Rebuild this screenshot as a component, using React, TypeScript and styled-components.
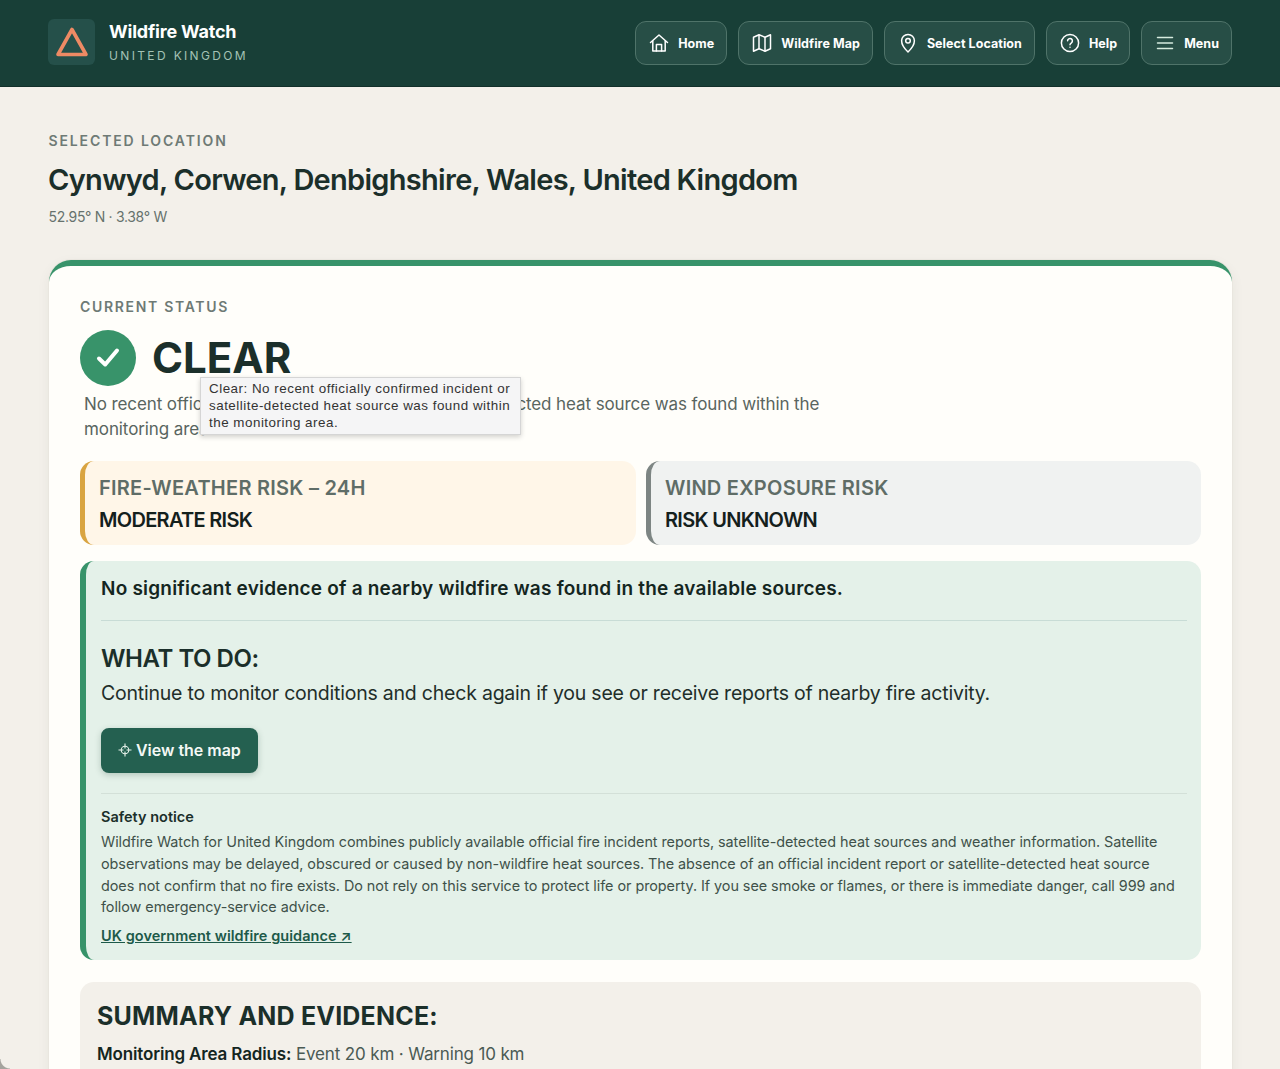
import React from 'react';
import styled, {createGlobalStyle} from 'styled-components';

const FONT = '"Inter", "Noto Sans", "Liberation Sans", sans-serif';

const GlobalStyle = createGlobalStyle`
    html, body {
        margin: 0;
        padding: 0;
        height: 1069px;
        overflow: hidden;
        background: #f3f0ea;
        font-family: ${FONT};
        color: #1b2f2a;
    }
    * {
        box-sizing: border-box;
    }
`;

const NAV_ITEMS = [
    {label: 'Home', icon: <HomeIcon/>},
    {label: 'Wildfire Map', icon: <MapIcon/>},
    {label: 'Select Location', icon: <PinIcon/>},
    {label: 'Help', icon: <HelpIcon/>},
    {label: 'Menu', icon: <MenuIcon/>},
];

function HomeIcon() {
    return (
        <svg width='20' height='20' viewBox='0 0 20 20' fill='none' stroke='#fff' strokeWidth='1.5' strokeLinejoin='round' strokeLinecap='round'>
            <path d='M1.5 9.5 10 2l8.5 7.5'/>
            <path d='M3.8 8v10h12.4V8'/>
            <path d='M7.4 18v-6.6h5.2V18'/>
        </svg>
    );
}

function MapIcon() {
    return (
        <svg width='20' height='20' viewBox='0 0 20 20' fill='none' stroke='#fff' strokeWidth='1.5' strokeLinejoin='round'>
            <path d='M1.5 4.2 7 1.8l6 2.4 5.5-2.4v14L13 18.2l-6-2.4-5.5 2.4z'/>
            <path d='M7 1.8v14M13 4.2v14'/>
        </svg>
    );
}

function PinIcon() {
    return (
        <svg width='20' height='20' viewBox='0 0 20 20' fill='none' stroke='#fff' strokeWidth='1.5'>
            <path d='M10 19s-6.4-6-6.4-11.2a6.4 6.4 0 0 1 12.8 0C16.4 13 10 19 10 19z' strokeLinejoin='round'/>
            <circle cx='10' cy='7.8' r='2.3'/>
        </svg>
    );
}

function HelpIcon() {
    return (
        <svg width='20' height='20' viewBox='0 0 20 20' fill='none' stroke='#fff' strokeWidth='1.5' strokeLinecap='round'>
            <circle cx='10' cy='10' r='8.6'/>
            <path d='M7.6 7.8a2.4 2.4 0 1 1 3.8 2c-.9.6-1.4 1-1.4 2'/>
            <path d='M10 14.2v.1'/>
        </svg>
    );
}

function MenuIcon() {
    return (
        <svg width='20' height='20' viewBox='0 0 20 20' fill='none' stroke='#d6ecdf' strokeWidth='1.5' strokeLinecap='round'>
            <path d='M2.5 4.5h15M2.5 10h15M2.5 15.5h15'/>
        </svg>
    );
}

const App = () => {
    return (
        <>
            <GlobalStyle/>
            <Header>
                <Brand>
                    <LogoTile>
                        <svg width='34' height='32' viewBox='0 0 34 32' fill='none'>
                            <path d='M17 3.5 31 28.5H3z' stroke='#ee8a64' strokeWidth='3.6' strokeLinejoin='round'/>
                        </svg>
                    </LogoTile>
                    <BrandText>
                        <BrandName>{'Wildfire Watch'}</BrandName>
                        <BrandCountry>{'UNITED KINGDOM'}</BrandCountry>
                    </BrandText>
                </Brand>
                <Nav>
                    {NAV_ITEMS.map((item) => (
                        <NavButton key={item.label}>
                            {item.icon}
                            <span>{item.label}</span>
                        </NavButton>
                    ))}
                </Nav>
            </Header>
            <Main>
                <Eyebrow>{'SELECTED LOCATION'}</Eyebrow>
                <LocationTitle>{'Cynwyd, Corwen, Denbighshire, Wales, United Kingdom'}</LocationTitle>
                <Coords>{'52.95° N · 3.38° W'}</Coords>
                <StatusCard>
                    <CardEyebrow>{'CURRENT STATUS'}</CardEyebrow>
                    <StatusRow>
                        <CheckBadge>
                            <svg width='28' height='28' viewBox='0 0 28 28' fill='none' stroke='#fff' strokeWidth='4' strokeLinecap='round' strokeLinejoin='round'>
                                <path d='M5 14.5 11.2 20.5 23 6.5'/>
                            </svg>
                        </CheckBadge>
                        <StatusWord>{'CLEAR'}</StatusWord>
                    </StatusRow>
                    <StatusText>
                        {'No recent officially confirmed incident or satellite-detected heat source was found within the monitoring area.'}
                        <Tooltip>{'Clear: No recent officially confirmed incident or satellite-detected heat source was found within the monitoring area.'}</Tooltip>
                    </StatusText>
                    <RiskGrid>
                        <RiskCard $bg='#fff6e8' $edge='#d9a441'>
                            <RiskLabel>{'FIRE-WEATHER RISK – 24H'}</RiskLabel>
                            <RiskValue>{'MODERATE RISK'}</RiskValue>
                        </RiskCard>
                        <RiskCard $bg='#f0f2f1' $edge='#7d8583'>
                            <RiskLabel>{'WIND EXPOSURE RISK'}</RiskLabel>
                            <RiskValue>{'RISK UNKNOWN'}</RiskValue>
                        </RiskCard>
                    </RiskGrid>
                    <AdvicePanel>
                        <AdviceLead>{'No significant evidence of a nearby wildfire was found in the available sources.'}</AdviceLead>
                        <LeadRule/>
                        <AdviceHeading>{'WHAT TO DO:'}</AdviceHeading>
                        <AdviceText>{'Continue to monitor conditions and check again if you see or receive reports of nearby fire activity.'}</AdviceText>
                        <MapButton>
                            <svg width='14' height='14' viewBox='0 0 14 14' fill='none' stroke='#e8f3ec' strokeWidth='1.1'>
                                <circle cx='7' cy='7' r='3.8'/>
                                <path d='M7 .5v5M7 8.5v5M.5 7h5M8.5 7h5'/>
                            </svg>
                            {'View the map'}
                        </MapButton>
                        <NoticeRule/>
                        <NoticeTitle>{'Safety notice'}</NoticeTitle>
                        <NoticeBody>
                            {'Wildfire Watch for United Kingdom combines publicly available official fire incident reports, satellite-detected heat sources and weather information. Satellite observations may be delayed, obscured or caused by non-wildfire heat sources. The absence of an official incident report or satellite-detected heat source does not confirm that no fire exists. Do not rely on this service to protect life or property. If you see smoke or flames, or there is immediate danger, call 999 and follow emergency-service advice.'}
                        </NoticeBody>
                        <GuidanceLink href='#'>{'UK government wildfire guidance ↗'}</GuidanceLink>
                    </AdvicePanel>
                    <SummaryPanel>
                        <SummaryHeading>{'SUMMARY AND EVIDENCE:'}</SummaryHeading>
                        <SummaryLine>
                            <strong>{'Monitoring Area Radius:'}</strong>
                            {' Event 20 km · Warning 10 km'}
                        </SummaryLine>
                    </SummaryPanel>
                </StatusCard>
            </Main>
            <WindowCorner/>
        </>
    );
};

const Header = styled.header`
    display: flex;
    align-items: center;
    justify-content: space-between;
    height: 87px;
    padding: 0 48px 1px 48px;
    background: #183f37;
    border-bottom: 1px solid #12302a;
`;

const Brand = styled.div`
    display: flex;
    align-items: center;
    gap: 14px;
    margin-top: -2px;
`;

const LogoTile = styled.div`
    display: flex;
    align-items: center;
    justify-content: center;
    width: 47px;
    height: 46px;
    border-radius: 6px;
    background: #25504a;
`;

const BrandText = styled.div`
    display: flex;
    flex-direction: column;
    gap: 5px;
`;

const BrandName = styled.div`
    font-size: 18px;
    line-height: 22px;
    font-weight: 700;
    letter-spacing: -0.2px;
    color: #fff;
`;

const BrandCountry = styled.div`
    font-size: 12px;
    line-height: 15px;
    letter-spacing: 2.35px;
    color: #a3c2b5;
`;

const Nav = styled.nav`
    display: flex;
    gap: 11px;
`;

const NavButton = styled.button`
    display: flex;
    align-items: center;
    gap: 9px;
    height: 44px;
    padding: 1px 12px 0 13px;
    border: 1px solid #4f7369;
    border-radius: 11px;
    background: #274e46;
    color: #fff;
    font-family: ${FONT};
    font-size: 12.5px;
    font-weight: 700;
    letter-spacing: 0.05px;
`;

const Main = styled.main`
    padding: 45px 48px 0 49px;
`;

const Eyebrow = styled.div`
    margin-left: -0.5px;
    font-size: 14px;
    line-height: 18px;
    font-weight: 600;
    letter-spacing: 1.87px;
    color: #6e7a75;
`;

const LocationTitle = styled.h1`
    margin: 11px 0 0 -1px;
    font-size: 29px;
    line-height: 38px;
    font-weight: 600;
    letter-spacing: -0.71px;
    color: #1b2f2a;
`;

const Coords = styled.div`
    margin: 8px 0 0 -0.5px;
    font-size: 14px;
    line-height: 20px;
    letter-spacing: -0.32px;
    color: #66726d;
`;

const StatusCard = styled.section`
    margin-top: 33px;
    padding: 32px 31px 0;
    height: 900px;
    background: #fffefa;
    border-top: 6px solid #38936a;
    border-radius: 22px;
    box-shadow: 0 0 0 1px #e9e6df, 0 4px 14px rgba(40, 50, 40, 0.06);
`;

const CardEyebrow = styled.div`
    font-size: 14px;
    line-height: 18px;
    font-weight: 600;
    letter-spacing: 1.68px;
    color: #6e7a75;
`;

const StatusRow = styled.div`
    display: flex;
    align-items: center;
    gap: 16px;
    margin-top: 14px;
`;

const CheckBadge = styled.div`
    display: flex;
    align-items: center;
    justify-content: center;
    width: 56px;
    height: 56px;
    border-radius: 50%;
    background: #38936a;
`;

const StatusWord = styled.div`
    font-size: 42px;
    line-height: 56px;
    font-weight: 700;
    letter-spacing: 0;
    color: #1b2f2a;
`;

const StatusText = styled.p`
    position: relative;
    width: 770px;
    margin: 6px 0 0 4px;
    font-size: 17px;
    line-height: 25px;
    letter-spacing: -0.1px;
    color: #59655f;
`;

const Tooltip = styled.div`
    position: absolute;
    left: 116px;
    top: -15px;
    width: 321px;
    padding: 2px 8px 3px;
    background: #f5f5f6;
    border: 1px solid #d5d5d5;
    box-shadow: 0 2px 5px rgba(0, 0, 0, 0.18);
    font-family: "Liberation Sans", Arial, sans-serif;
    font-size: 13.4px;
    line-height: 17px;
    letter-spacing: 0.5px;
    color: #333;
`;

const RiskGrid = styled.div`
    display: grid;
    grid-template-columns: 556px 555px;
    gap: 10px;
    margin-top: 19px;
`;

const RiskCard = styled.div<{$bg: string; $edge: string}>`
    height: 84px;
    padding: 14px 14px 0;
    background: ${(p) => p.$bg};
    border-left: 5px solid ${(p) => p.$edge};
    border-radius: 14px;
`;

const RiskLabel = styled.div`
    font-size: 20px;
    line-height: 26px;
    font-weight: 600;
    letter-spacing: 0.25px;
    color: #5f6d67;
`;

const RiskValue = styled.div`
    margin-top: 6px;
    font-size: 20px;
    line-height: 26px;
    font-weight: 600;
    letter-spacing: -0.7px;
    color: #14201c;
`;

const AdvicePanel = styled.div`
    margin-top: 16px;
    padding: 15px 14px 12px 15px;
    height: 399px;
    background: #e4f1e9;
    border-left: 6px solid #38936a;
    border-radius: 14px;
`;

const AdviceLead = styled.div`
    font-size: 19px;
    line-height: 26px;
    font-weight: 600;
    letter-spacing: 0.21px;
    color: #14261f;
`;

const LeadRule = styled.hr`
    margin: 18px 0 0;
    border: 0;
    border-top: 1px solid #c8dcd6;
`;

const AdviceHeading = styled.h2`
    margin: 24px 0 0;
    font-size: 24px;
    line-height: 28px;
    font-weight: 600;
    letter-spacing: -0.45px;
    color: #1b2f2a;
`;

const AdviceText = styled.p`
    margin: 6px 0 0;
    font-size: 19.5px;
    line-height: 28px;
    letter-spacing: -0.22px;
    color: #1f2e29;
`;

const MapButton = styled.button`
    display: flex;
    align-items: center;
    gap: 4px;
    width: 157px;
    height: 45px;
    margin-top: 21px;
    padding: 0 0 1px 17px;
    border: 0;
    border-radius: 8px;
    background: #246050;
    box-shadow: 0 2px 6px rgba(30, 70, 55, 0.25);
    color: #f3f8f5;
    font-family: ${FONT};
    font-size: 16px;
    font-weight: 600;
    letter-spacing: -0.02px;
`;

const NoticeRule = styled.hr`
    margin: 20px 0 0;
    border: 0;
    border-top: 1px solid #d3e0d8;
`;

const NoticeTitle = styled.div`
    margin-top: 13px;
    font-size: 14.5px;
    line-height: 20px;
    font-weight: 600;
    color: #1b2f2a;
`;

const NoticeBody = styled.p`
    margin: 4px 0 0;
    padding-right: 6px;
    font-size: 14.4px;
    line-height: 21.75px;
    letter-spacing: -0.05px;
    color: #3f514a;
`;

const GuidanceLink = styled.a`
    display: inline-block;
    margin-top: 8px;
    font-size: 14.5px;
    line-height: 20px;
    font-weight: 600;
    letter-spacing: 0.05px;
    color: #1d5a49;
`;

const SummaryPanel = styled.div`
    margin-top: 22px;
    padding: 18px 17px;
    height: 200px;
    background: #f3f0ea;
    border-radius: 14px;
`;

const SummaryHeading = styled.h2`
    margin: 0;
    font-size: 25px;
    line-height: 32px;
    font-weight: 700;
    letter-spacing: 0.2px;
    color: #1b2f2a;
`;

const SummaryLine = styled.p`
    margin: 10px 0 0;
    font-size: 17px;
    line-height: 24px;
    letter-spacing: -0.15px;
    color: #4a5a54;

    strong {
        font-weight: 600;
        color: #14261f;
    }
`;

const WindowCorner = styled.div`
    position: fixed;
    left: 0;
    bottom: 0;
    width: 10px;
    height: 10px;
    background: radial-gradient(circle at 100% 0, transparent 9px, #a5a49e 10px);
`;

export default App;
